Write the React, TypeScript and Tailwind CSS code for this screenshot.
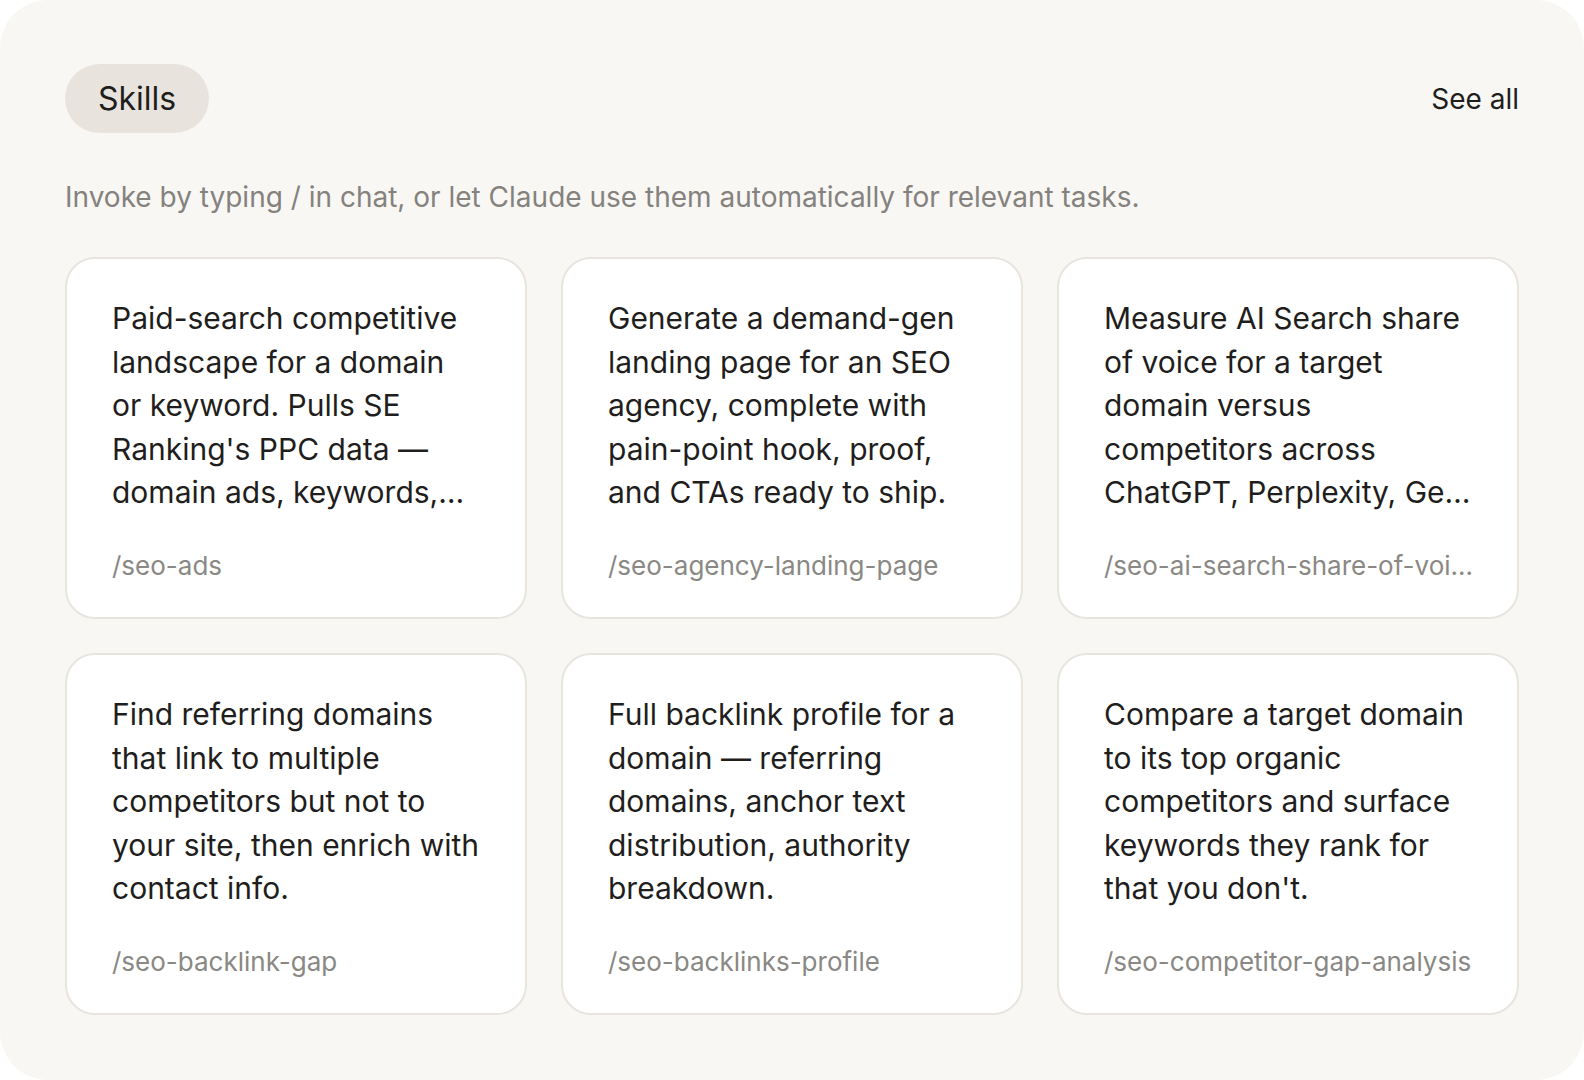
import React from "react";

type Skill = { description: string; command: string };

const nb = "\u00a0";

const skills: Skill[] = [
  {
    description:
      "Paid-search competitive landscape for a domain or keyword. Pulls SE Ranking's PPC data — domain ads, keywords, competitors and ad copy history.",
    command: "/seo-ads",
  },
  {
    description:
      "Generate a demand-gen landing page for an SEO agency, complete with pain-point hook, proof, and CTAs ready to ship.",
    command: "/seo-agency-landing-page",
  },
  {
    description: `Measure AI Search share of voice for a target domain versus competitors across ChatGPT,${nb}Perplexity,${nb}Gemini${nb}and${nb}AI${nb}Overviews.`,
    command: "/seo-ai-search-share-of-voice",
  },
  {
    description:
      "Find referring domains that link to multiple competitors but not to your site, then enrich with contact info.",
    command: "/seo-backlink-gap",
  },
  {
    description:
      "Full backlink profile for a domain — referring domains, anchor text distribution, authority breakdown.",
    command: "/seo-backlinks-profile",
  },
  {
    description:
      "Compare a target domain to its top organic competitors and surface keywords they rank for that you don't.",
    command: "/seo-competitor-gap-analysis",
  },
];

function SkillCard({ skill }: { skill: Skill }) {
  return (
    <div className="flex h-[362px] flex-col rounded-[30px] border-2 border-[#e8e5de] bg-white pb-[33px] pl-[45px] pr-[43px] pt-[38px]">
      <p className="line-clamp-5 text-ellipsis text-[30px] leading-[43.5px] text-[#1f1e1d]">
        {skill.description}
      </p>
      <p className="mt-auto truncate text-[26px] leading-[36px] text-[#8a8884]">
        {skill.command}
      </p>
    </div>
  );
}

export default function App() {
  return (
    <div
      className="min-h-screen bg-white"
      style={{ fontFamily: "Inter, 'Noto Sans', sans-serif" }}
    >
      <div className="h-[1080px] w-full rounded-[48px] bg-[#f8f7f4] px-[65px] pt-[64px]">
        <div className="flex items-center justify-between">
          <div className="flex h-[69px] items-center rounded-full bg-[#e8e4dd] px-[33px] text-[32px] text-[#1f1e1d]">
            Skills
          </div>
          <button className="text-[28px] text-[#1f1e1d]">See all</button>
        </div>
        <p className="mt-[44px] text-[28px] leading-[40px] text-[#85827e]">
          Invoke by typing / in chat, or let Claude use them automatically for relevant tasks.
        </p>
        <div className="mt-[40px] grid grid-cols-3 gap-x-[34px] gap-y-[34px]">
          {skills.map((s) => (
            <SkillCard key={s.command} skill={s} />
          ))}
        </div>
      </div>
    </div>
  );
}
